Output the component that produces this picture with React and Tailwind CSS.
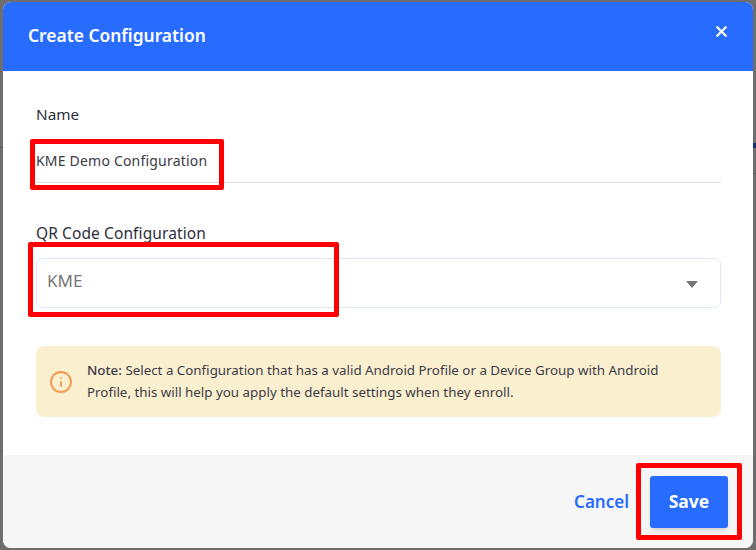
import { X, Info } from 'lucide-react'

function Annotation({ className }) {
  return <div className={`absolute border-[5px] border-[#ff0000] rounded-[2px] pointer-events-none ${className}`} />
}

export default function App() {
  return (
    <div className="relative w-[756px] h-[550px] overflow-hidden bg-[#6e6e6e] pt-[2px] pl-[3px] font-['Noto_Sans',sans-serif]">
      {/* dimmed page peeking out past the modal */}
      <div className="absolute right-0 top-[143px] w-[3px] h-[5px] bg-[#12306e]" />
      <div className="absolute left-0 top-[147px] w-[3px] h-[1px] bg-[#5a5a5a]" />
      <div className="absolute right-0 top-[173px] w-[3px] h-[1px] bg-[#5a5a5a]" />

      <div className="relative w-[750px] h-[546px] flex flex-col rounded-[8px] overflow-hidden bg-white">
        <div className="h-[69px] shrink-0 bg-[#276cff] flex items-center justify-between pl-[25px] pr-[25px]">
          <h2 className="text-[17.4px] font-semibold text-white leading-[24px] -mt-[4px]">Create Configuration</h2>
          <X className="w-[17px] h-[17px] text-white -mt-[10px] mr-[-2px]" strokeWidth={3.2} />
        </div>

        <div className="flex-1 flex flex-col pl-[33px] pr-[32px] pt-[33px]">
          <label className="text-[15.3px] leading-[20px] text-[#2e2e3a]">Name</label>
          <div className="mt-[15px] h-[44px] pt-[11px] border-b border-[#dddddd] text-[14px] tracking-[0.2px] leading-[22px] text-[#3a3a46]">
            KME Demo Configuration
          </div>
          <label className="mt-[40px] text-[15.5px] tracking-[0.1px] leading-[20px] text-[#2e2e3a]">QR Code Configuration</label>
          <div className="mt-[15px] h-[50px] rounded-[6px] border border-[#dfe8fb] flex items-center justify-between pl-[10px] pr-[22px]">
            <span className="text-[17px] text-[#757575] -mt-[4px]">KME</span>
            <span className="w-0 h-0 border-l-[6.5px] border-r-[6.5px] border-t-[7px] border-l-transparent border-r-transparent border-t-[#757575] mt-[3px]" />
          </div>
          <div className="mt-[38px] h-[71px] rounded-[8px] bg-[#faefcf] flex items-center pl-[13px] pr-[40px] gap-[14px]">
            <Info className="w-[24px] h-[24px] text-[#f5994e] shrink-0" strokeWidth={1.9} />
            <p className="text-[13.35px] leading-[22px] text-[#3c3c48] -mt-[2px]">
              <span className="font-medium">Note:</span> Select a Configuration that has a valid Android Profile or a Device Group with Android Profile, this will help you apply the default settings when they enroll.
            </p>
          </div>
        </div>

        <div className="h-[93px] shrink-0 bg-[#f6f6f6] flex items-center justify-end pr-[25px] gap-[21px]">
          <button className="text-[17px] font-semibold text-[#276cff]">Cancel</button>
          <button className="w-[78px] h-[52px] rounded-[3px] bg-[#276cff] text-white text-[17.5px] font-bold shadow-md">Save</button>
        </div>
      </div>

      <Annotation className="left-[30px] top-[139px] w-[194px] h-[51px]" />
      <Annotation className="left-[28px] top-[242px] w-[311px] h-[75px]" />
      <Annotation className="left-[636px] top-[463px] w-[106px] h-[77px]" />
    </div>
  )
}
